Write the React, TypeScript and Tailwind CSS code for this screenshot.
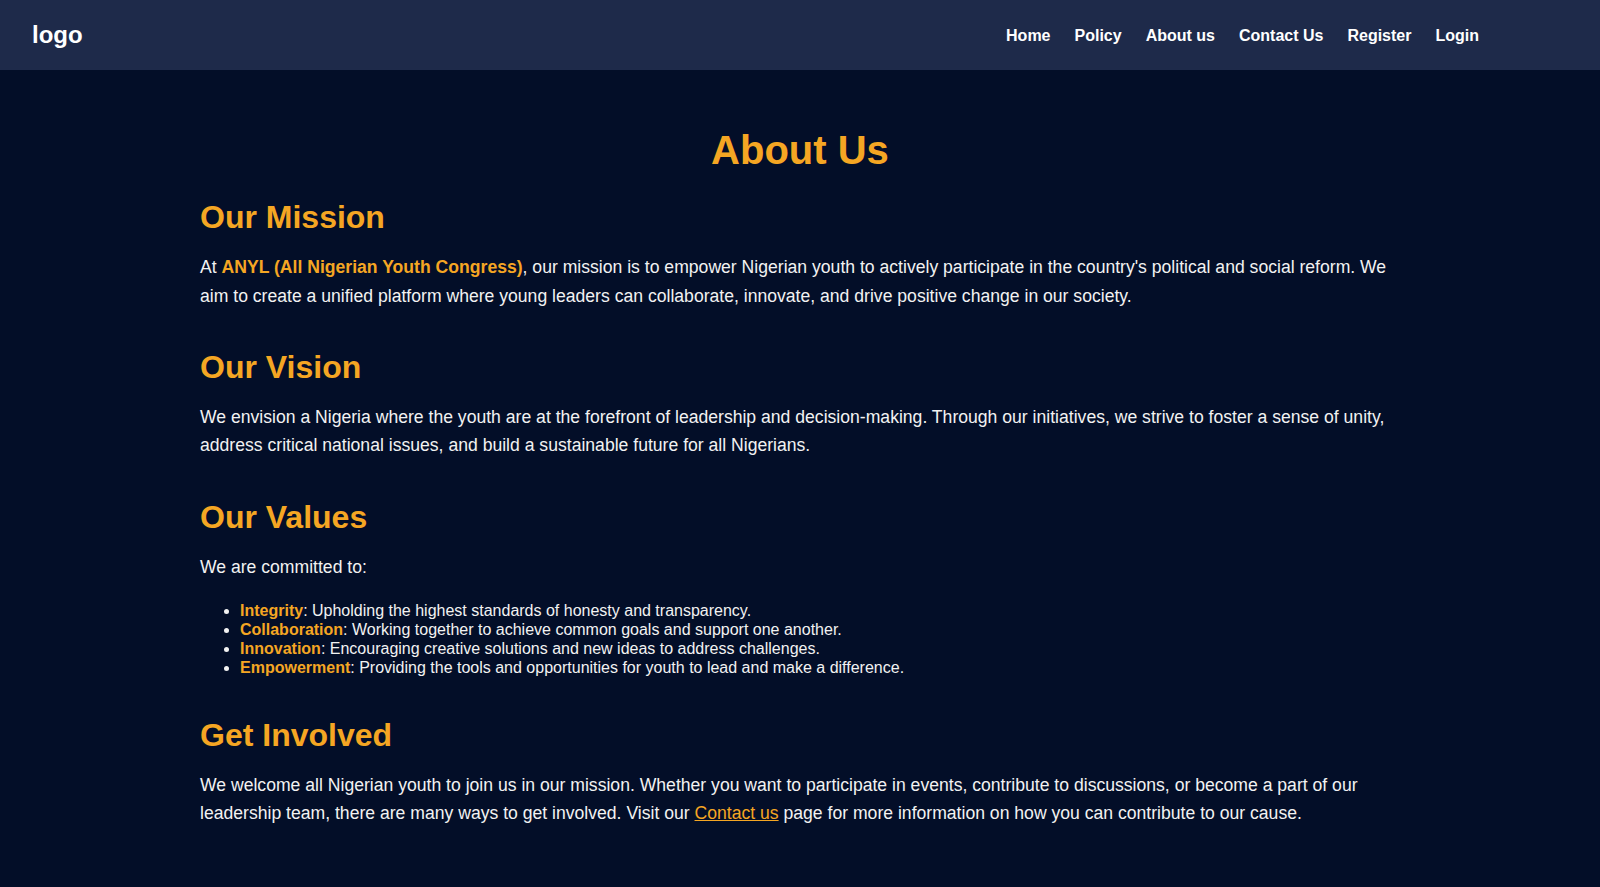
const navLinks = ['Home', 'Policy', 'About us', 'Contact Us', 'Register', 'Login'];

const values = [
  { name: 'Integrity', text: 'Upholding the highest standards of honesty and transparency.' },
  { name: 'Collaboration', text: 'Working together to achieve common goals and support one another.' },
  { name: 'Innovation', text: 'Encouraging creative solutions and new ideas to address challenges.' },
  { name: 'Empowerment', text: 'Providing the tools and opportunities for youth to lead and make a difference.' },
];

const Heading: React.FC<{ children: React.ReactNode; tight?: boolean }> = ({ children, tight }) => (
  <h2 className={`text-[32px] font-bold leading-[1.2] text-[#f5a623] ${tight ? 'mb-4' : 'mb-[17px]'}`}>{children}</h2>
);

export default function App() {
  return (
    <div className="min-h-[887px] bg-[#030e28] font-['Liberation_Sans',Arial,sans-serif] text-[#f2f2f2]">
      <header className="h-[70px] bg-[#1e2a4a] flex items-center justify-between pl-8 pr-[121px]">
        <a href="#" className="text-2xl font-bold text-white">
          logo
        </a>
        <nav className="flex items-center gap-6 mt-[1px]">
          {navLinks.map((link) => (
            <a key={link} href="#" className="text-base font-bold text-white">
              {link}
            </a>
          ))}
        </nav>
      </header>

      <main className="max-w-[1200px] mx-auto pt-[56px] pb-10">
        <h1 className="text-[40px] font-bold leading-[1.2] text-center text-[#f5a623] mb-6">About Us</h1>

        <section className="mb-[38px]">
          <Heading>Our Mission</Heading>
          <p className="text-[17.6px] leading-[1.6]">
            At <span className="font-bold text-[#f5a623]">ANYL (All Nigerian Youth Congress)</span>, our mission is to
            empower Nigerian youth to actively participate in the country's political and social reform. We aim to
            create a unified platform where young leaders can collaborate, innovate, and drive positive change in our
            society.
          </p>
        </section>

        <section className="mb-[39px]">
          <Heading>Our Vision</Heading>
          <p className="text-[17.6px] leading-[1.6]">
            We envision a Nigeria where the youth are at the forefront of leadership and decision-making. Through our
            initiatives, we strive to foster a sense of unity, address critical national issues, and build a
            sustainable future for all Nigerians.
          </p>
        </section>

        <section className="mb-[38px]">
          <Heading tight>Our Values</Heading>
          <p className="text-[17.6px] leading-[1.6] mb-5">We are committed to:</p>
          <ul className="list-disc pl-10 text-base leading-[1.2]">
            {values.map((v) => (
              <li key={v.name}>
                <span className="font-bold text-[#f5a623]">{v.name}</span>: {v.text}
              </li>
            ))}
          </ul>
        </section>

        <section>
          <Heading>Get Involved</Heading>
          <p className="text-[17.6px] leading-[1.6]">
            We welcome all Nigerian youth to join us in our mission. Whether you want to participate in events,
            contribute to discussions, or become a part of our leadership team, there are many ways to get involved.
            Visit our{' '}
            <a href="#" className="text-[#f5a623] underline">
              Contact us
            </a>{' '}
            page for more information on how you can contribute to our cause.
          </p>
        </section>
      </main>
    </div>
  );
}
